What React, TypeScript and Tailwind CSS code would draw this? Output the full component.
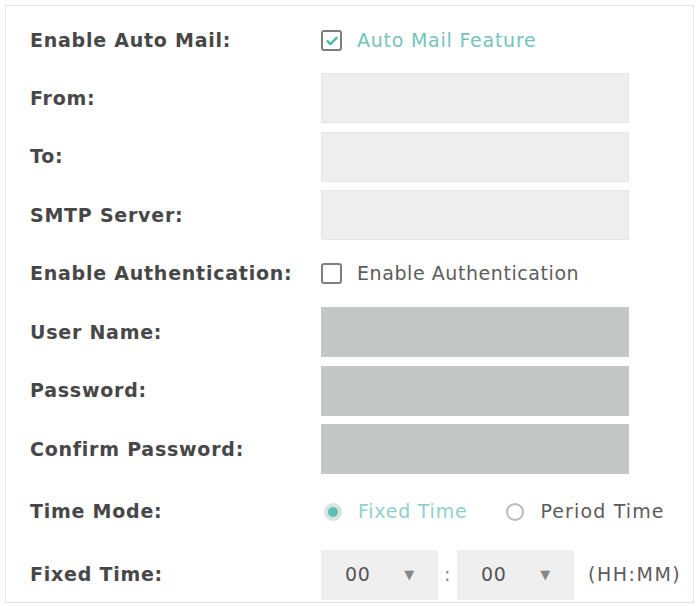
import React from "react";

type RowProps = {
  label: string;
  h: string;
  children?: React.ReactNode;
};

function Row({ label, h, children }: RowProps) {
  return (
    <div className={`flex items-center ${h}`}>
      <div className="w-[315px] shrink-0 pl-[24px] font-bold text-[#474747]">{label}</div>
      <div className="flex items-center">{children}</div>
    </div>
  );
}

function TextBox({ dark = false }: { dark?: boolean }) {
  return (
    <div
      className={`h-[50px] w-[308px] ${dark ? "bg-[#c5c6c6]" : "bg-[#eeeeee] border border-[#e6e6e6]"}`}
    />
  );
}

function Check({ checked }: { checked?: boolean }) {
  return (
    <span className="flex h-[21px] w-[21px] items-center justify-center rounded-[3px] border-2 border-[#7d7d7d] bg-white">
      {checked && (
        <svg width="12" height="10" viewBox="0 0 12 10" fill="none">
          <path d="M1.5 5.2 L4.6 8 L10.5 1.8" stroke="#43b8a8" strokeWidth="2.4" strokeLinecap="round" strokeLinejoin="round" />
        </svg>
      )}
    </span>
  );
}

function Radio({ on }: { on?: boolean }) {
  return on ? (
    <span className="flex h-[18px] w-[18px] items-center justify-center rounded-full bg-[#d6e4e2]">
      <span className="block h-[10px] w-[10px] rounded-full bg-[#5cc2b4]" />
    </span>
  ) : (
    <span className="block h-[18px] w-[18px] rounded-full border-2 border-[#b8b8b8] bg-white" />
  );
}

function TimeSelect() {
  return (
    <div className="flex h-[50px] w-[117px] items-center justify-between bg-[#efefef] pl-[24px] pr-[23px] text-[#555]">
      <span>00</span>
      <span className="text-[13px] text-[#888]">▼</span>
    </div>
  );
}

export default function App() {
  return (
    <div
      className="h-[606px] w-[696px] bg-white p-[5px] text-[19px] leading-none tracking-[0.04em]"
      style={{ fontFamily: '"DejaVu Sans", Verdana, sans-serif' }}
    >
      <div className="h-[598px] w-[689px] border border-[#e4e4e4] pt-[6px]">
        <Row label="Enable Auto Mail:" h="h-[57px]">
          <Check checked />
          <span className="ml-[15px] text-[#73c4ba]">Auto Mail Feature</span>
        </Row>
        <Row label="From:" h="h-[58px]">
          <TextBox />
        </Row>
        <Row label="To:" h="h-[59px]">
          <TextBox />
        </Row>
        <Row label="SMTP Server:" h="h-[58px]">
          <TextBox />
        </Row>
        <Row label="Enable Authentication:" h="h-[59px]">
          <Check />
          <span className="ml-[15px] text-[#5c5c5c] tracking-[0.03em]">Enable Authentication</span>
        </Row>
        <Row label="User Name:" h="h-[58px]">
          <TextBox dark />
        </Row>
        <Row label="Password:" h="h-[59px]">
          <TextBox dark />
        </Row>
        <Row label="Confirm Password:" h="h-[58px]">
          <TextBox dark />
        </Row>
        <Row label="Time Mode:" h="h-[67px]">
          <span className="ml-[3px]">
            <Radio on />
          </span>
          <span className="ml-[16px] text-[#8fd0c7]">Fixed Time</span>
          <span className="ml-[39px]">
            <Radio />
          </span>
          <span className="ml-[16px] text-[#5c5c5c] tracking-[0.06em]">Period Time</span>
        </Row>
        <Row label="Fixed Time:" h="h-[59px]">
          <TimeSelect />
          <span className="w-[19px] text-center text-[#888]">:</span>
          <TimeSelect />
          <span className="ml-[14px] text-[#5c5c5c] tracking-[0.08em]">(HH:MM)</span>
        </Row>
      </div>
    </div>
  );
}
